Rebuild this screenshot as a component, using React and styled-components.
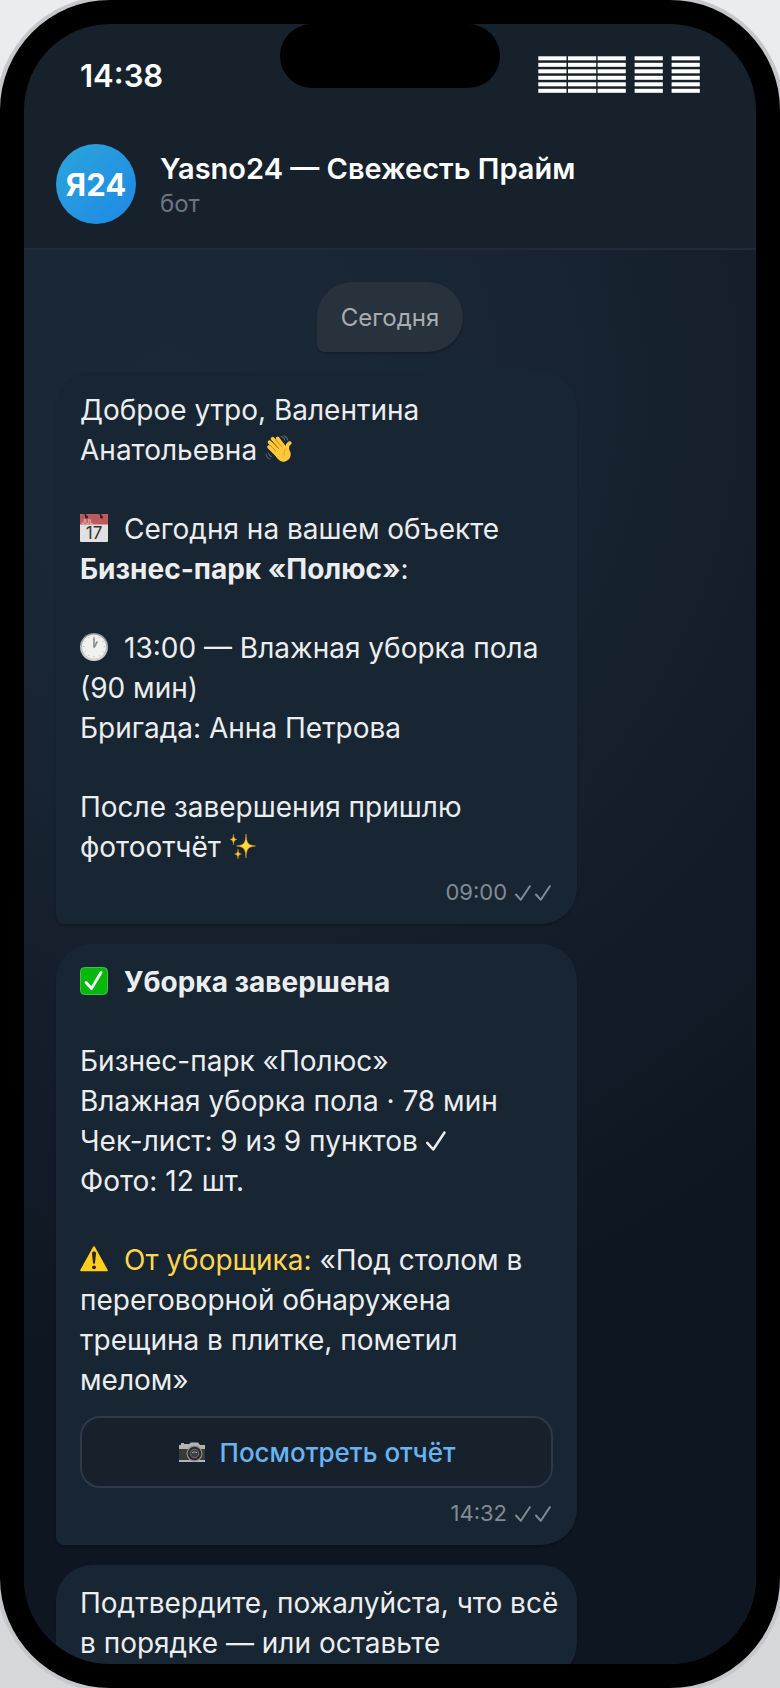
import React from 'react';
import styled, { createGlobalStyle } from 'styled-components';

const GlobalStyle = createGlobalStyle`
*{
    box-sizing:border-box;
}
body{
    margin:0;
    background:linear-gradient(to bottom, #ebecf0, #d6d7db);
    font-family:"Inter", "Noto Sans", sans-serif;
}
`;
const Phone = styled.div`
position:relative;
display:flex;
width:100%;
height:100vh;
padding:24px;
border-radius:110px;
background-color:#000;
box-shadow:0 0 0 4px #c6c7ca;
overflow:hidden;
`;
const Frame = styled.div`
overflow:hidden;
`;
const Screen = styled.div`
display:flex;
flex-direction:column;
flex:1;
min-width:0;
border-radius:86px;
background-color:#17212b;
overflow:hidden;
`;
const Island = styled.div`
position:absolute;
top:24px;
left:50%;
width:220px;
height:64px;
margin-left:-110px;
border-radius:32px;
background-color:#000;
`;
const StatusBar = styled.div`
display:flex;
justify-content:space-between;
align-items:center;
flex:none;
height:102px;
padding:0 56px;
font-weight:600;
font-size:31px;
color:#fff;
`;
const Header = styled.header`
display:flex;
align-items:center;
gap:24px;
flex:none;
height:124px;
padding:0 32px 6px;
border-bottom:2px solid #202c39;
`;
const Avatar = styled.div`
display:flex;
justify-content:center;
align-items:center;
width:80px;
height:80px;
border-radius:50%;
background:linear-gradient(135deg, #2ca5da, #1e88e5);
font-weight:700;
font-size:31px;
color:#fff;
`;
const Title = styled.h1`
margin:0;
font-weight:600;
font-size:29px;
line-height:38px;
color:#fff;
`;
const Subtitle = styled.div`
font-size:24px;
line-height:31px;
color:#6a7681;
`;
const Chat = styled.main`
display:flex;
flex-direction:column;
align-items:flex-start;
gap:20px;
flex:1;
min-height:0;
padding:32px;
overflow:hidden;
background:radial-gradient(130% 68% at 20% 10%, #1b2937 0%, #182431 40%, #0e1621 100%);
`;
const DateChip = styled.div`
align-self:center;
flex:none;
padding:17px 24px 15px;
border-radius:36px 36px 36px 8px;
background-color:#28323d;
box-shadow:0 2px 2px rgba(0,0,0,0.2);
font-size:24px;
line-height:38px;
color:#a9adb1;
`;
const Bubble = styled.article`
flex:none;
width:78%;
padding:18px 24px 16px;
border-radius:36px 36px 36px 8px;
background-color:#182533;
box-shadow:0 2px 2px rgba(0,0,0,0.2);
font-size:28px;
line-height:40px;
color:#ebedee;
`;
const Text = styled.p`
margin:0 0 ${props => props.$last ? "0" : "39px"};
white-space:nowrap;
`;
const Accent = styled.span`
color:#ffd54f;
`;
const Meta = styled.div`
display:flex;
justify-content:flex-end;
align-items:center;
gap:4px;
margin-top:10px;
padding-right:2px;
font-size:22px;
line-height:31px;
color:#838b93;
`;
const MetaTime = styled.time`
margin-right:4px;
`;
const ReportBtn = styled.button`
display:flex;
justify-content:center;
align-items:center;
gap:14px;
width:100%;
height:72px;
margin-top:16px;
border:2px solid #2b3948;
border-radius:20px;
background-color:#17212b;
font-family:inherit;
font-weight:500;
font-size:26px;
color:#6ab3f3;
`;
const Emoji = styled.svg`
width:28px;
height:28px;
margin-right:${props => props.$lead ? "16px" : "0"};
vertical-align:-3px;
`;
const CheckSvg = styled.svg`
width:${props => props.$large ? "20px" : "16px"};
height:${props => props.$large ? "20px" : "16px"};
fill:none;
stroke:currentColor;
stroke-width:2;
stroke-linecap:round;
stroke-linejoin:round;
`;
const SignalSvg = styled.svg`
width:162px;
height:38px;
`;

const Signal = () => (
    <SignalSvg viewBox="0 0 162 38" fill="#fff" aria-hidden="true">
        {[0, 29.7, 59.3, 96.3, 133.3].map(x =>
            [0, 6.5, 13, 19.5, 26, 32.5].map(y =>
                <rect key={x + "-" + y} x={x + 0.3} y={y + 0.3} width="28.2" height="4" />
            )
        )}
    </SignalSvg>
);

const Check = ({ large }) => (
    <CheckSvg $large={large} viewBox="0 0 16 16" aria-hidden="true">
        <path d="M1 9.500L5.800 14.800L14.800 1.200" />
    </CheckSvg>
);

const MessageMeta = ({ time }) => (
    <Meta>
        <MetaTime>{time}</MetaTime>
        <Check />
        <Check />
    </Meta>
);

const Wave = () => (
    <Emoji viewBox="0 0 28 28" role="img" aria-label="привет">
        <g stroke="#ffc93a" strokeLinecap="round" fill="none">
            <path d="M4 12l9 9" strokeWidth="3.6" />
            <path d="M4.6 7.2L15 18" strokeWidth="3.8" />
            <path d="M7.6 3.8L18 15" strokeWidth="3.8" />
            <path d="M12.6 3.4L20 13" strokeWidth="3.6" />
            <path d="M22.5 15.5c-.6-3.500.2-6.500 2.300-7.500" strokeWidth="3.6" />
        </g>
        <path d="M9 18L18 9l5.500 5c3.500 3.500 2.500 8.500-.5 11-4 3-8 2-11-2z" fill="#ffc93a" />
        <g stroke="#d9901a" strokeWidth=".8" fill="none" strokeLinecap="round">
            <path d="M5 10l6 6M8 8l6 6M11 5.500l6 6.500" />
            <path d="M21 14c-2 2-2.500 4-1.500 6" />
        </g>
        <g stroke="#59646d" strokeWidth="1.100" fill="none" strokeLinecap="round">
            <path d="M16 1.500c2 .4 3.500 1.800 4 4M19 .8c2 .7 3.400 2.200 3.800 4.400M1 19c.3 2.600 1.500 4.300 4 5M3.500 18c.3 1.800 1.200 3 3 3.600" />
        </g>
    </Emoji>
);

const Calendar = () => (
    <Emoji $lead viewBox="0 0 28 28" role="img" aria-label="календарь">
        <rect width="28" height="28" rx="1" fill="#e0e0e0" />
        <path d="M0 1a1 1 0 0 1 1-1h26a1 1 0 0 1 1 1v9.500H0z" fill="#bf5a5c" />
        <path d="M5 0l1.500 3M20 0l1.500 3" stroke="#33202a" strokeWidth="1.600" />
        <circle cx="6.500" cy="3" r="1.500" fill="#33202a" />
        <circle cx="21.500" cy="3" r="1.500" fill="#33202a" />
        <text x="1.500" y="9.500" fontSize="6" fontWeight="700" fill="#e3b3b4">JUL</text>
        <text x="14" y="25" fontSize="17" textAnchor="middle" fill="#333">17</text>
    </Emoji>
);

const Clock = () => (
    <Emoji $lead viewBox="0 0 28 28" role="img" aria-label="время">
        <defs>
            <linearGradient id="rim" x1="0" y1="0" x2="0" y2="1">
                <stop offset="0" stopColor="#8e9397" />
                <stop offset="1" stopColor="#d8dadb" />
            </linearGradient>
        </defs>
        <circle cx="14" cy="14" r="14" fill="url(#rim)" />
        <circle cx="14" cy="13.500" r="12" fill="#f1f1f0" />
        <path d="M14 2.500v1.500M14 23v1.500M3 13.500h1.500M23.500 13.500H25M8.500 4l.7 1.200M19.500 4l-.7 1.200M4.500 8l1.200.7M23.500 8l-1.200.7M4.500 19l1.200-.7M23.500 19l-1.200-.7M8.500 23l.7-1.200M19.500 23l-.7-1.200" stroke="#b3b5b6" strokeWidth=".8" />
        <path d="M14 14.500V4.500" stroke="#777b7e" strokeWidth="1.400" />
        <path d="M14 14.500l3.300-6" stroke="#888c8f" strokeWidth="1.600" />
    </Emoji>
);

const Sparkles = () => (
    <Emoji viewBox="0 0 28 28" role="img" aria-label="искры">
        <path d="M17 2c.6 9 1.500 11 9.500 12-8 1-8.900 3-9.500 12-.6-9-1.500-11-9.500-12 8-1 8.900-3 9.500-12z" fill="#ffd93b" stroke="#e39a2d" strokeWidth=".5" />
        <path d="M4.500 2c.3 3.800.8 4.900 3.500 5.500-2.700.6-3.200 1.700-3.500 5.500-.3-3.800-.8-4.900-3.500-5.500C3.700 6.900 4.200 5.800 4.500 2zM9 17c.3 3.400.8 4.500 3.500 5-2.700.5-3.200 1.600-3.500 5-.3-3.400-.8-4.500-3.500-5 2.700-.5 3.200-1.600 3.500-5z" fill="#ffcc36" stroke="#e39a2d" strokeWidth=".4" />
    </Emoji>
);

const Done = () => (
    <Emoji $lead viewBox="0 0 28 28" role="img" aria-label="готово">
        <rect x=".5" y=".5" width="27" height="27" rx="4" fill="#06b80c" stroke="#45bd49" />
        <path d="M6 15.500l5.500 6L21 5.500" fill="none" stroke="#fff" strokeWidth="2.800" strokeLinecap="round" strokeLinejoin="round" />
    </Emoji>
);

const Warning = () => (
    <Emoji $lead viewBox="0 0 28 28" role="img" aria-label="внимание">
        <path d="M14 2L27 25.500H1z" fill="#ffcf1f" stroke="#ffcf1f" strokeWidth="1.600" strokeLinejoin="round" />
        <path d="M12 8.500c0-2.600 4-2.600 4 0l-.9 9c-.1 1.700-2.100 1.700-2.200 0z" fill="#2a2413" />
        <circle cx="14" cy="22.300" r="1.900" fill="#2a2413" />
    </Emoji>
);

const Camera = () => (
    <Emoji viewBox="0 0 28 28" aria-hidden="true">
        <path d="M1 7h2V5h3v1h5l2-1.500h7L22 7h5v17H1z" fill="#b5b5b3" />
        <path d="M1 11h26v11H1z" fill="#3a3a3a" />
        <circle cx="16.500" cy="15.500" r="8" fill="#8f8f8d" />
        <circle cx="16.500" cy="15.500" r="6.800" fill="#2b2c2e" />
        <circle cx="16.500" cy="15.500" r="4.200" fill="#3c3f43" stroke="#6c6e70" />
        <path d="M14 14.800c1.500-1 3.500-1 5 0" stroke="#a5a9ad" fill="none" />
        <circle cx="24" cy="9.500" r="1" fill="#d9a741" />
    </Emoji>
);

const App = () => {
    return (
        <Frame>
            <GlobalStyle />
            <Phone>
                <Screen>
                    <StatusBar>
                        <span>14:38</span>
                        <Signal />
                    </StatusBar>
                    <Header>
                        <Avatar>Я24</Avatar>
                        <div>
                            <Title>Yasno24 — Свежесть Прайм</Title>
                            <Subtitle>бот</Subtitle>
                        </div>
                    </Header>
                    <Chat>
                        <DateChip>Сегодня</DateChip>
                        <Bubble>
                            <Text>
                                Доброе утро, Валентина<br />
                                Анатольевна <Wave />
                            </Text>
                            <Text>
                                <Calendar />Сегодня на вашем объекте<br />
                                <b>Бизнес-парк «Полюс»</b>:
                            </Text>
                            <Text>
                                <Clock />13:00 — Влажная уборка пола<br />
                                (90 мин)<br />
                                Бригада: Анна Петрова
                            </Text>
                            <Text $last>
                                После завершения пришлю<br />
                                фотоотчёт <Sparkles />
                            </Text>
                            <MessageMeta time="09:00" />
                        </Bubble>
                        <Bubble>
                            <Text><Done /><b>Уборка завершена</b></Text>
                            <Text>
                                Бизнес-парк «Полюс»<br />
                                Влажная уборка пола · 78 мин<br />
                                Чек-лист: 9 из 9 пунктов <Check large /><br />
                                Фото: 12 шт.
                            </Text>
                            <Text $last>
                                <Warning /><Accent>От уборщика:</Accent> «Под столом в<br />
                                переговорной обнаружена<br />
                                трещина в плитке, пометил<br />
                                мелом»
                            </Text>
                            <ReportBtn type="button"><Camera />Посмотреть отчёт</ReportBtn>
                            <MessageMeta time="14:32" />
                        </Bubble>
                        <Bubble>
                            <Text $last>
                                Подтвердите, пожалуйста, что всё<br />
                                в порядке — или оставьте
                            </Text>
                        </Bubble>
                    </Chat>
                </Screen>
                <Island />
            </Phone>
        </Frame>
    );
};

export default App;
